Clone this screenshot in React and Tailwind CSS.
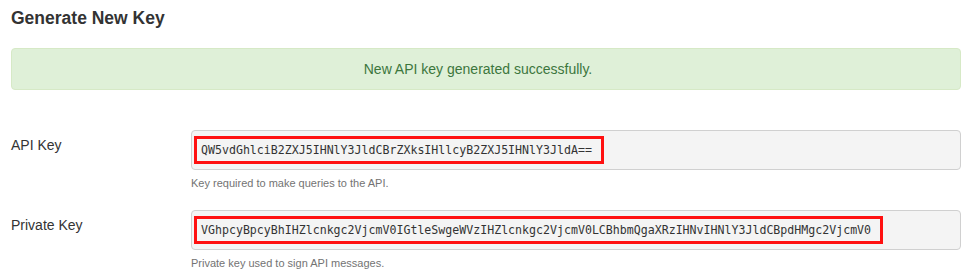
const API_KEY = "QW5vdGhlciB2ZXJ5IHNlY3JldCBrZXksIHllcyB2ZXJ5IHNlY3JldA==";
const PRIVATE_KEY =
  "VGhpcyBpcyBhIHZlcnkgc2VjcmV0IGtleSwgeWVzIHZlcnkgc2VjcmV0LCBhbmQgaXRzIHNvIHNlY3JldCBpdHMgc2VjcmV0";

function KeyRow({ label, value, help }) {
  return (
    <div className="flex">
      <div className="w-[180px] shrink-0 pt-[5px] text-[14px] leading-5 text-[#333]">{label}</div>
      <div className="flex-1">
        <div className="flex h-[40px] items-center rounded-[4px] border border-[#d0d0d0] bg-[#f4f4f4] px-[2px]">
          <span className="border-[3px] border-[#ff1010] py-[3px] pl-[4px] pr-[9px] font-['DejaVu_Sans_Mono',monospace] text-[11.6px] leading-[16px] text-[#333]">
            {value}
          </span>
        </div>
        <p className="mt-[6px] text-[11px] leading-[14px] text-[#737373]">{help}</p>
      </div>
    </div>
  );
}

export default function App() {
  return (
    <div className="min-h-screen bg-white pl-[11px] pr-[12px] pt-[7px] font-['Liberation_Sans',Arial,sans-serif]">
      <h2 className="text-[17.5px] font-bold leading-[22px] text-[#333]">Generate New Key</h2>

      <div className="mt-[19px] flex h-[42px] items-center justify-center rounded-[4px] border border-[#d6e9c6] bg-[#dff0d8] pr-[16px] text-[14px] text-[#3c763d]">
        New API key generated successfully.
      </div>

      <div className="mt-[40px] flex flex-col gap-[20px]">
        <KeyRow label="API Key" value={API_KEY} help="Key required to make queries to the API." />
        <KeyRow label="Private Key" value={PRIVATE_KEY} help="Private key used to sign API messages." />
      </div>
    </div>
  );
}
